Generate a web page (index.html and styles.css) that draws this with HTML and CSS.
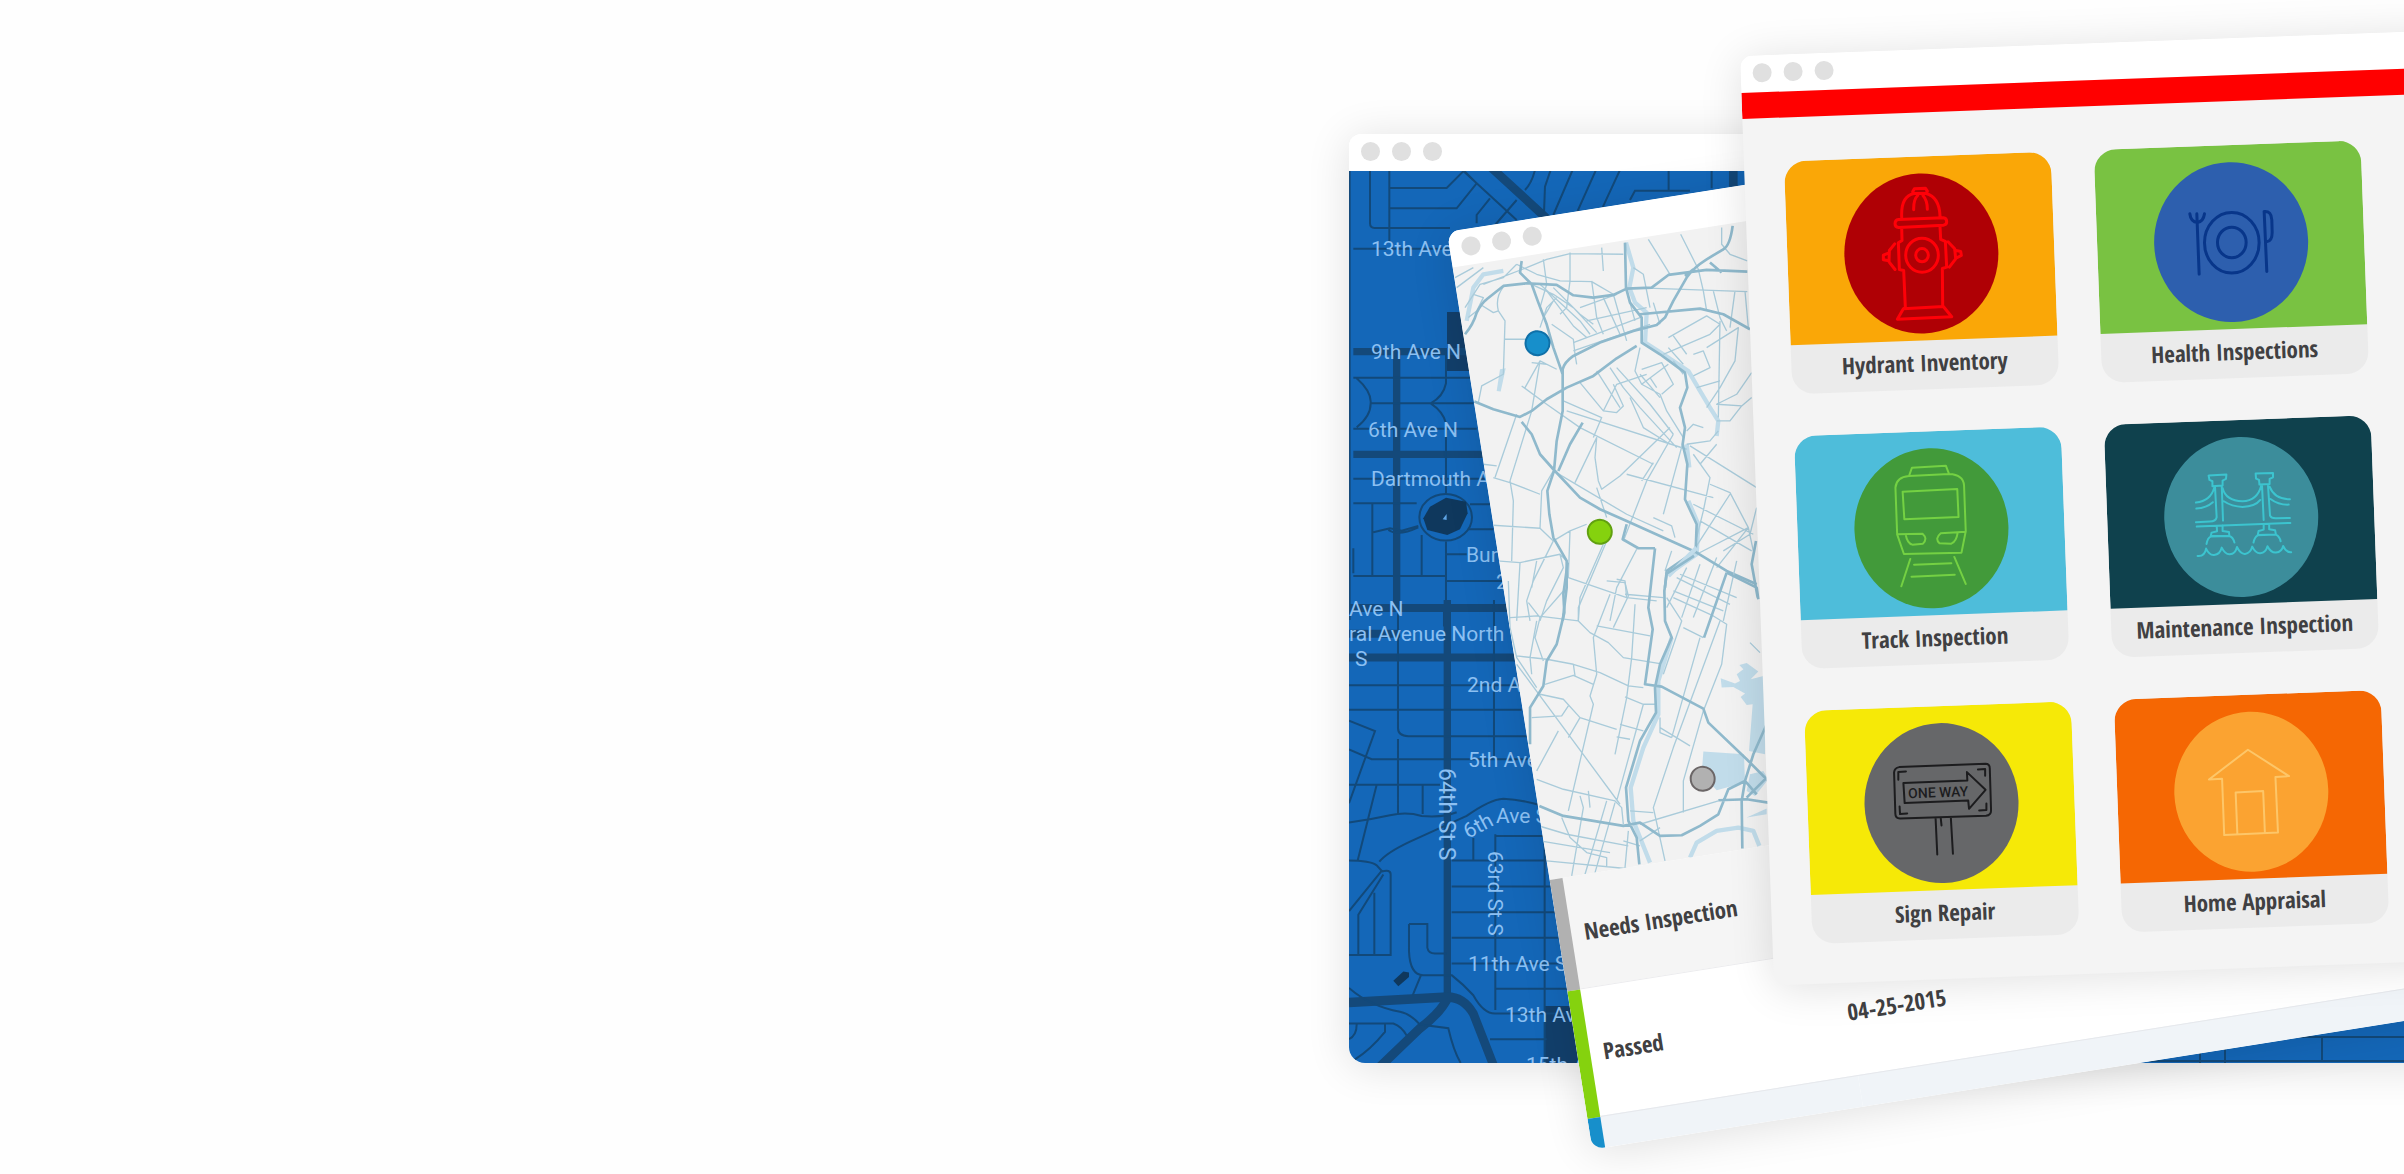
FILE: index.html
```html
<!DOCTYPE html>
<html lang="en">
<head>
<meta charset="utf-8">
<title>Inspection apps</title>
<link rel="stylesheet" href="styles.css">
</head>
<body>
<main class="hero">
  <div class="hero-copy"></div>
  <div class="stage">

    <section class="window window-streets" aria-label="Street map">
      <header class="titlebar"><i></i><i></i><i></i></header>
      <svg class="street-map" viewBox="0 0 1100 892" preserveAspectRatio="xMinYMin slice">
        <g class="blocks"><path d="M98 141H130V200H98zM195 835H240V892H195z"/></g>
        <!-- northern half -->
        <g transform="translate(-9 -51) scale(.3333)">
          <g class="avenue">
            <path class="wide" d="M440 130L625 300M1180 150V200"/>
            <path d="M27 150V1500" stroke-width="10"/>
            <path d="M40 695H380M170 700V1465M40 1003H430M40 1465H510M320 1465V1520" />
          </g>
          <g class="lane">
            <path d="M90 150V310Q90 324 104 324H330M148 150V365M148 204H320L372 152L410 190L350 265H148M345 130L530 300M410 310V285L450 235M465 315L530 240M585 150Q575 190 555 210M632 150L615 200L612 280M698 150L640 285M768 150L712 275M840 150L788 262M870 240L885 212H1050M986 150V212M1115 150V205M40 386H330"/>
            <path d="M40 773H390M50 775Q95 815 92 850Q92 890 50 922M92 850H400M318 690V790Q310 830 272 850Q310 875 318 910V1120M40 926H410M40 1076H440M40 1150H230M390 1153H450M97 1150V1368M100 1237L150 1225L185 1232L235 1218M145 1230Q175 1250 235 1222M245 1245V1368M40 1368H318V1265M318 1303H380M318 1383H500M318 1370V1460M385 1228H460M40 1285V1360"/>
            <ellipse cx="317" cy="1192" rx="79" ry="70"/>
          </g>
          <path class="lake" d="M270 1160L318 1133L378 1145L383 1180L360 1228L322 1245L262 1230L250 1195Z"/>
          <path class="mark" d="M308 1198L320 1182V1200Z"/>
        </g>
        <!-- southern half -->
        <g transform="translate(-9 429) scale(.3333 .366)">
          <g class="avenue">
            <path d="M27 22H520M27 157H530M322 0V1080M27 92H180"/>
            <path class="wide" d="M27 1100L322 1085Q370 1085 400 1130L460 1270M325 1085Q300 1130 240 1170L120 1275"/>
          </g>
          <g class="lane">
            <path d="M174 20V350Q174 372 205 372H560M27 233H540M27 300H545M27 330L105 358L27 555M27 408L95 435H575M174 380V585M27 505H300M110 505L53 712M248 505V585M27 608Q90 600 150 588Q200 578 245 590Q310 595 350 580M118 715Q140 690 210 660L380 590Q450 545 490 543Q540 545 600 560M462 0V430"/>
            <path d="M27 712Q90 712 110 725L125 740L27 850M125 742Q152 735 152 750V970H27M130 750L55 860V970M103 800V970M207 885H262V950Q265 966 285 966H320M207 885V960Q210 1025 250 1025H335Q370 1050 400 1080Q430 1130 465 1130H690M27 1060Q90 1110 180 1125Q210 1130 240 1160L325 1170Q340 1230 362 1265M243 1025L218 1080M27 1157H160Q185 1165 200 1190M135 1160V1180Q90 1230 45 1255M50 1160Q50 1190 27 1200"/>
            <path d="M335 712H640M335 783H640M335 853H650M335 923H655M335 993H670M466 640V1120M466 645H610M466 1062H690M614 570V1265M400 650V710M450 1200H620"/>
          </g>
          <path class="lake" d="M160 1040L190 1015L207 1018V1030L175 1055Z"/>
        </g>
        <path class="lane" d="M800 866H1100M800 890H1100M851 860V892M876 860V892M973 866V890"/>
        <g class="street-names">
          <text x="22" y="85">13th Ave N</text>
          <text x="22" y="188">9th Ave N</text>
          <text x="19" y="266">6th Ave N</text>
          <text x="22" y="315">Dartmouth Ave N</text>
          <text x="117" y="391">Burlington</text>
          <text x="147" y="418">20th</text>
          <text x="0" y="445">Ave N</text>
          <text x="0" y="470">ral Avenue North</text>
          <text x="6" y="495">S</text>
          <text x="118" y="521">2nd Ave S</text>
          <text x="119" y="596">5th Ave S</text>
          <text x="147" y="652">Ave S</text>
          <text x="119" y="800">11th Ave S</text>
          <text x="156" y="851">13th Ave S</text>
          <text x="177" y="901">15th Ave S</text>
          <text transform="translate(119 668) rotate(-28)">6th</text>
          <text class="upright" transform="translate(90 597) rotate(90)">64th St S</text>
          <text transform="translate(139 680) rotate(90)">63rd St S</text>
        </g>
      </svg>
    </section>

    <section class="window window-results" aria-label="Inspection results">
      <header class="titlebar"><i></i><i></i><i></i></header>
      <svg class="city-map" viewBox="0 0 1100 620" preserveAspectRatio="xMinYMin slice">
        <g transform="rotate(9) translate(-112.6 -146.6) scale(.3333)">
          <path class="river" d="M858 365L880 440L868 500L885 545L920 575L915 665L970 700L1045 750L1080 810L1110 860L1135 900L1130 945M380 600L400 500L430 460L490 450M1040 970L1048 1040M1045 1140L1075 1210L1070 1300L985 1360"/>
          <path class="water" d="M480 745L497 742L482 812L470 810Z"/>
          <g class="street">
            <path d="M345 470L400 440M350 500L430 440M375 560L420 490L490 470L530 430M400 520L430 530L410 570L385 590M420 550L460 575L475 570L495 600L490 760L425 795L415 845M475 570Q465 530 490 498M495 655L555 655M430 490L560 440L620 415L690 398L850 400M530 430L590 460L660 480L755 482L820 520M610 415L620 490L600 560M690 395V480L680 560L660 580M785 380L790 450M755 480L770 590L790 640M575 490L640 520L700 560L770 635M600 490L720 600L750 640M620 510L700 615L740 650M640 500L720 580L760 610M600 620L620 560L650 530M610 590L640 540M720 560L830 520M740 600L920 560M790 530L840 640M820 520L860 660M860 510L885 600M700 665L900 590M700 690L930 610"/>
            <path d="M925 355L990 460M1022 340L1075 445L1090 510L1100 570M880 500L1222 512M880 440L910 460L930 560M940 545L960 610M1145 320V370L1170 400L1222 420M1120 510L1140 590L1160 630M1185 510L1170 620M1215 510L1225 620M985 650L1100 585L1140 610L1110 640L970 700M1000 645L1040 700M985 680L1030 730M1060 700L1090 690L1110 740L1060 765M1100 680L1195 620L1185 720L1140 800L1100 860M1140 600L1135 890M1070 800L1140 780M1235 755L1190 820L1130 850L1205 855L1170 900L1130 900M1235 830L1205 855M635 610L700 655L705 700L710 730M555 800L600 720L650 745M575 725L620 730M545 795L620 850L720 920L940 1030M510 1080L575 870L600 720M465 1070L530 880M670 840L785 890L760 950M720 785L790 870L830 875L850 855L820 790M680 870L1040 985M790 870L830 790L920 760M770 750L840 860M810 740L850 800L900 860L1010 980M830 740L930 850L1000 940M900 680L885 750L905 790L960 820L980 870L1030 950M870 830L910 920L990 970M905 745L965 725L1000 790L965 820M905 790L985 730M930 770L950 800M1000 720L1030 760M900 760L960 830"/>
            <path d="M705 1085L770 950L765 1010L775 1080L785 1105L840 1065L990 920M850 1260L920 1080L1000 940M800 1190L770 1100M640 1050L860 1180L970 1230M860 1060L1120 1130M940 1025L905 1080M970 1180L1030 960M940 1190L995 1215L1005 1250M1050 975L1250 1100M1080 1030L1130 970M1060 1000L1110 1070L1090 1170L1070 1250M1110 1090L1170 1115L1225 1220L1240 1290M1060 1150L1240 1240M1080 1200L1235 1290M1060 1290L1170 1120M1070 1300L1225 1220M1130 1340L1225 1220M1150 1290L1230 1240L1250 1160M1040 930L1060 910L1090 920M1040 970L1110 960L1135 930M430 1030L470 1035M460 1070L510 1085L600 1120M510 1080L520 1140L515 1320M460 1213L600 1222L605 1110L640 1050M600 1222L640 1260L690 1230L740 1210M470 1320L540 1325L660 1300L680 1320M640 1260L580 1380L560 1440L570 1500M660 1300L670 1340L620 1440L600 1500M540 1325L530 1500M590 1320L575 1400M690 1230L685 1370L860 1430L950 1440M790 1270L720 1430L715 1500M890 1285L830 1400L810 1500M830 1375L855 1380L860 1430M995 1290L975 1350M1020 1360L1190 1430M1130 1310L1060 1490"/>
          </g>
          <path class="highway" d="M375 640Q400 610 410 575Q425 545 440 535L490 495L560 487L650 492L700 523L760 530L820 522L860 503L935 500L985 462L1100 447L1222 452M1178 315Q1170 375 1150 385L1100 415Q1060 440 1040 470L1000 540L975 590L950 612L880 630L780 665L700 705Q672 725 668 745V870L650 960L642 1050L622 1110L628 1180L640 1250L680 1320L680 1400L668 1500M545 420L540 455L575 490L595 545L620 610L640 680L668 760M855 365L858 500L870 545L905 590V665L960 700L1035 755L1042 800L1020 860L1035 920L1028 970L1042 1030L1035 1135L1070 1210L1067 1290L980 1350L975 1400M403 842L460 865L540 888L575 870L620 835L680 800L760 765L830 712L890 675M545 903L575 940L600 1000L640 1045L720 1130L780 1165L860 1200L1070 1295L1160 1350L1250 1390M728 905L690 970L655 1050M900 580L1080 563L1150 580L1230 625M860 1210L848 1255L895 1282H945M1060 445L1035 465M1110 425L1145 455"/>
        </g>
        <g transform="rotate(9) translate(47.4 273.4) scale(.3333)">
          <path class="river" d="M590 20L505 105M515 290L475 420L475 520L430 620L392 740L400 840L450 965M570 950L590 905L650 870L715 860L760 870L778 915"/>
          <path class="water" d="M610 632L732 640L735 725L650 748L605 700ZM662 412L705 428L720 420L710 400L730 385L718 372L740 366L775 392L752 415L790 405L796 560L795 640L747 630L758 490L740 492L722 468L735 458L700 438L665 440ZM750 700L790 690L805 715L765 765L740 750ZM740 830L800 803V820Z"/>
          <g class="street">
            <path d="M25 120L30 260L50 350L110 440M30 230L110 225L235 240L270 275L325 305L370 350L480 368M85 185L120 230L190 150M110 240L90 350L95 400M120 230L105 290L130 360M50 345L140 355L220 370L300 395L385 435L430 440M235 240L235 200L320 0M330 160L280 290L290 400L270 465L280 490L205 810M320 120L375 125L385 165L340 260M290 255L450 285M405 190L395 350L380 470L345 640M490 170L375 160M135 430L220 403L280 430M220 370L225 405M120 460L190 475L240 530L350 565M205 495L185 525L95 530M240 530L205 590M175 570L110 690M50 370L360 790M375 468L430 490L465 490M360 550L430 570M350 588L390 595M430 490L350 780M550 260L610 290M520 170L640 225L680 250L665 370L610 510L550 720V815M500 170L545 240L490 400M660 240L520 620L460 800L495 960M600 290L515 590M560 80L500 200M600 70L545 230M710 60L670 240M520 150L670 210M530 110L690 190M480 560L570 615M480 530V575L515 590"/>
            <path d="M110 715L190 745L345 780L365 800L370 850M100 850L200 880L385 915M120 900L330 935M140 960L400 985M240 765L250 800L215 1005M320 780L255 1000M345 785L285 995M385 870L375 980M185 830L210 890L260 935L320 950L320 980M390 810L460 815M420 850L655 780M270 800L265 750M480 860L420 900M750 305L780 335M370 900L420 915"/>
          </g>
          <path class="highway" d="M203 65L190 160L193 215L170 310L140 360L130 435L90 500L90 610M582 45L500 98L493 150L495 240L515 290L480 370L465 440L468 515L420 600L378 740L385 840L410 890L418 970M680 95L770 140L775 175M465 22L445 200L458 265L435 430L485 437L610 503L625 545L740 655L805 720M680 95L612 290M118 795L190 825L370 855L420 845L480 885L545 883L600 855L655 820L685 745L735 720L760 640L800 550M655 778L740 775L805 785M735 720L725 780L727 923M740 770L800 710M735 720L770 760M768 0L755 70L773 170"/>
        </g>
      </svg>
      <span class="pin pin-new"></span>
      <span class="pin pin-passed"></span>
      <span class="pin pin-needs"></span>
      <table class="results">
        <tbody>
          <tr class="row-needs"><th scope="row">Needs Inspection</th><td></td></tr>
          <tr class="row-passed"><th scope="row">Passed</th><td>04-25-2015</td></tr>
          <tr class="row-new"><th scope="row"></th><td></td></tr>
        </tbody>
      </table>
    </section>

    <section class="window window-apps" aria-label="Apps">
      <header class="titlebar"><i></i><i></i><i></i></header>
      <div class="brandbar"></div>
      <div class="apps">
        <figure class="app hydrant">
          <svg viewBox="-134 -97 267 184"><ellipse rx="77" ry="80"/>
            <g transform="rotate(2.1) scale(.3333) translate(-244 -277)">
              <path d="M185 168Q182 105 222 97L218 92L223 83L256 81L262 90L258 97Q298 108 300 165M222 97L258 96M233 103Q220 115 221 146M249 103Q262 118 262 144M175 175L310 170Q320 171 320 182Q320 191 310 192L176 199Q165 198 165 188Q165 176 175 175ZM185 202L186 238L175 245L178 325L191 328L196 440M300 197L302 235L316 241L320 318L307 322L308 435M190 443L310 436L335 467L172 474L190 443M164 248L148 268L147 302L165 325M147 275L130 282V296L147 299M324 242L344 263L347 293L328 318M344 267L362 271L364 283L348 291"/>
              <ellipse cx="246" cy="282" rx="49" ry="51"/><ellipse cx="246" cy="282" rx="19" ry="20"/>
            </g></svg>
          <figcaption>Hydrant Inventory</figcaption>
        </figure>
        <figure class="app track">
          <svg viewBox="-134 -97 267 184"><ellipse rx="77" ry="80"/>
            <g transform="rotate(2.1) scale(.4235 .3333) translate(-453 -384)">
              <path d="M400 227L407 202L487 196L495 222M372 400L368 262Q370 230 400 227L495 221Q528 223 530 255L534 393L524 457L388 461L372 402L432 400Q445 415 433 430L408 433Q396 430 392 402M534 394L475 399Q460 415 472 429L500 430Q512 424 515 397M385 274L514 266L517 350L389 357ZM403 476L382 558M507 470L534 551M412 493L500 489M406 529L508 523"/>
            </g></svg>
          <figcaption>Track Inspection</figcaption>
        </figure>
        <figure class="app sign">
          <svg viewBox="-134 -97 267 184"><ellipse rx="77" ry="80"/>
            <g transform="rotate(2.1) scale(.4235 .3333) translate(-478 -370)">
              <path d="M378 262L582 252Q592 252 592 266L595 392Q595 406 583 408L380 416Q369 416 369 402L366 278Q367 264 378 262ZM388 310L539 302L538 277L582 330L543 387L541 362L391 370ZM376 300V277L394 275M564 269L581 268V288M379 380L380 403L397 401M567 392L584 391V371M464 415L468 524M500 413L505 522M476 413L478 437"/>
            </g>
            <text x="-33" y="-6">ONE WAY</text></svg>
          <figcaption>Sign Repair</figcaption>
        </figure>
        <figure class="app health">
          <svg viewBox="-134 -97 267 184"><ellipse rx="77" ry="80"/>
            <g transform="rotate(2.1) scale(.3333) translate(-391 -302)">
              <ellipse cx="393" cy="304" rx="82" ry="91"/><ellipse cx="393" cy="303" rx="43" ry="46"/>
              <path d="M267 217Q270 242 290 243Q308 240 311 217M288 217L295 398M490 210L498 390M490 210Q512 208 513 235L514 270Q515 300 497 301"/>
            </g></svg>
          <figcaption>Health Inspections</figcaption>
        </figure>
        <figure class="app bridge">
          <svg viewBox="-134 -97 267 184"><ellipse rx="77" ry="80"/>
            <g transform="rotate(2.1) scale(.4235 .3333) translate(-1182 -349)">
              <path d="M1105 225L1147 222L1146 235L1138 240V255L1114 257V242L1107 238ZM1216 219L1257 217V230L1249 235V250L1225 252L1224 238L1217 234ZM1120 257L1124 350Q1122 362 1108 363L1075 365M1136 256L1139 360M1231 252L1235 358M1245 251L1250 345Q1253 354 1265 353L1297 352M1077 378L1298 367M1075 306Q1110 300 1118 262M1076 324Q1100 322 1115 305M1138 262Q1145 300 1185 302Q1220 300 1229 256M1141 302Q1160 318 1185 319Q1215 318 1227 298M1249 258Q1260 295 1297 296M1251 295Q1270 313 1294 312M1124 376L1125 392L1112 396L1110 406H1154L1153 394L1138 391V375M1100 430Q1103 411 1110 408L1154 406Q1163 410 1166 426M1235 371V387L1223 391L1221 403L1264 402L1262 389L1248 386V370M1211 426Q1213 410 1221 404L1264 402Q1273 408 1275 422M1079 466Q1096 468 1099 444Q1107 465 1118 463Q1132 462 1136 441Q1144 462 1155 461Q1168 460 1172 439Q1180 461 1191 460Q1204 458 1208 438Q1216 459 1227 458Q1240 456 1244 437Q1252 457 1264 456Q1278 454 1281 436Q1288 456 1300 455"/>
            </g></svg>
          <figcaption>Maintenance Inspection</figcaption>
        </figure>
        <figure class="app home">
          <svg viewBox="-134 -97 267 184"><ellipse rx="77" ry="80"/>
            <g transform="rotate(2.1) scale(.4235 .3333) translate(-1208 -335)">
              <path d="M1144 465L1139 296L1108 298L1200 209L1297 288L1265 291L1271 457ZM1175 459L1171 337L1236 333L1240 455"/>
            </g></svg>
          <figcaption>Home Appraisal</figcaption>
        </figure>
        <figure class="app next">
          <svg viewBox="-134 -97 267 184"></svg>
        </figure>
      </div>
    </section>

  </div>
</main>
</body>
</html>
```

FILE: styles.css
```css
* { box-sizing: border-box; }

body {
  margin: 0;
  background: #fefefe;
  font-family: "Open Sans Condensed", "Liberation Sans Narrow", "Open Sans", sans-serif;
  color: #404042;
}

.hero {
  display: grid;
  grid-template-columns: minmax(0, 1fr) 1055px;
  min-height: 100vh;
  overflow: hidden;
}

.stage { position: relative; }

/* windows lie freely over each other */
.window {
  position: absolute;
  display: flex;
  flex-direction: column;
  width: 1100px;
  border-radius: 12px;
  overflow: hidden;
  background: #fff;
  box-shadow: 0 4px 44px rgba(0, 0, 0, .12);
  transform-origin: 0 0;
}
.window-streets { left: 0; top: 134px; border-radius: 12px 12px 16px 16px; }
.window-results { left: 98px; top: 232px; transform: rotate(-9deg); }
.window-apps { left: 391px; top: 56px; transform: rotate(-2.1deg); background: #f4f4f4; }

.titlebar {
  display: flex;
  flex: none;
  align-items: center;
  gap: 12px;
  height: 37px;
  padding: 0 12px 2px;
  background: #fff;
}
.titlebar i {
  width: 19px;
  height: 19px;
  border-radius: 50%;
  background: #e0e0e0;
}
.window-results .titlebar { height: 36px; }

/* street map */
.street-map { display: block; height: 892px; background: #1467b8; }
.street-map .blocks { fill: #123f6b; }
.avenue { fill: none; stroke: #14497a; stroke-width: 22; }
.avenue .wide { stroke-width: 26; }
.lane { fill: none; stroke: #12497a; stroke-width: 2px; }
.lane path, .lane ellipse { vector-effect: non-scaling-stroke; }
.lake { fill: #0f385d; }
.mark { fill: #5fa5e6; }
.street-names { font: 21px Roboto, sans-serif; fill: #8cc0f2; }
.street-names .upright { font-size: 23px; }

/* city map */
.city-map { display: block; height: 620px; background: #f2f2f2; }
.city-map path { fill: none; stroke-linejoin: round; }
.city-map .water { fill: #c1dcea; }
.river { stroke: #c1dcea; stroke-width: 13; }
.street { stroke: #a9cbda; stroke-width: 4; }
.highway { stroke: #8fb9cc; stroke-width: 8; }

.pin {
  position: absolute;
  width: 26px;
  height: 26px;
  border: 2px solid;
  border-radius: 50%;
}
.pin-new { left: 59px; top: 111px; background: #178fcb; border-color: #0f70a8; }
.pin-passed { left: 91px; top: 307px; background: #85d20e; border-color: #61a010; }
.pin-needs { left: 154px; top: 567px; background: #b1b1b1; border-color: #6b6667; }

.results { width: 100%; border-collapse: collapse; table-layout: fixed; font-size: 23px; line-height: 32px; }
.results th, .results td { padding: 0; text-align: left; font-weight: 700; }
.results th { width: 267px; border-left: 13px solid; padding-left: 13px; }
.row-needs { height: 112px; background: #f5f5f5; }
.row-passed { height: 129px; border-top: 1px solid #ececee; border-bottom: 1px solid #e6e8ec; }
.row-new { height: 32px; background: #f0f4f8; }
.row-needs th { border-left-color: #b1b1b1; }
.row-passed th { border-left-color: #85d20e; }
.row-new th { border-left-color: #178fcb; }

/* app gallery */
.brandbar { flex: none; height: 26px; background: #f00; }
.apps {
  display: grid;
  grid-auto-flow: column;
  grid-template-rows: repeat(3, 233px);
  grid-auto-columns: 267px;
  gap: 42px 43px;
  padding: 44px 40px 40px;
}
.app {
  margin: 0;
  border-radius: 22px;
  overflow: hidden;
  background: #ebebeb;
}
.app svg { display: block; width: 100%; height: 184px; }
.app svg g path, .app svg g ellipse {
  fill: none;
  stroke: currentColor;
  stroke-width: 2px;
  stroke-linecap: round;
  stroke-linejoin: round;
  vector-effect: non-scaling-stroke;
}
.hydrant svg g path, .hydrant svg g ellipse,
.health svg g path, .health svg g ellipse { stroke-width: 3px; }
.app svg text { font: 500 14px Roboto, sans-serif; fill: currentColor; }
.app figcaption { font-size: 23px; font-weight: 700; line-height: 45px; text-align: center; white-space: nowrap; }

.hydrant svg { background: #faa707; fill: #af0005; color: #ff0008; }
.track svg { background: #4ebdda; fill: #429a3a; color: #74d143; }
.sign svg { background: #f6e907; fill: #666769; color: #1c1c1e; }
.health svg { background: #79c242; fill: #2d5fae; color: #08368a; }
.bridge svg { background: #0f414d; fill: #3c8d9b; color: #3cc4cf; }
.home svg { background: #f56703; fill: #fba331; color: #fdc668; }
.next svg { background: #f6e907; }
```
